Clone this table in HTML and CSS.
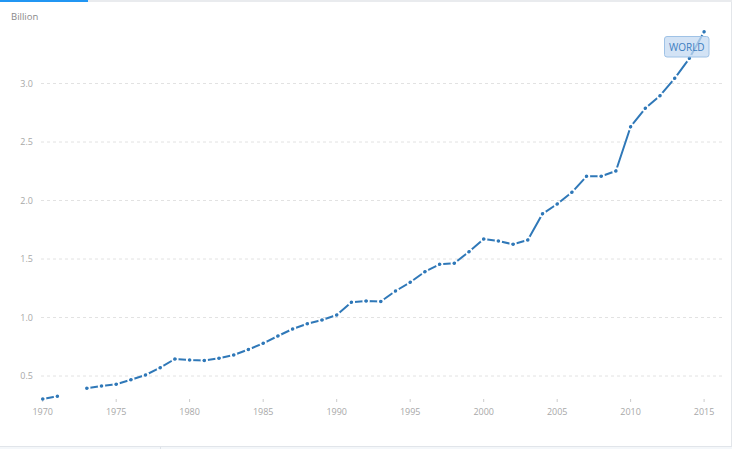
FILE: index.html
```html
<!DOCTYPE html>
<html lang="en">
<head>
<meta charset="utf-8">
<title>World chart</title>
<link rel="stylesheet" href="styles.css">
</head>
<body>
<div class="panel">
  <div class="tabbar"><div class="tab-active"></div><div class="tab-rest"></div></div>
  <div class="chart">
    <svg class="plot" width="731" height="444" viewBox="0 2 731 444" xmlns="http://www.w3.org/2000/svg">
      <defs>
        <g id="pts">
          <circle cx="42.7" cy="399" r="1"/>
          <circle cx="57.4" cy="396.3" r="1"/>
          <circle cx="86.8" cy="388.3" r="1"/>
          <circle cx="101.5" cy="386" r="1"/>
          <circle cx="116.2" cy="384.3" r="1"/>
          <circle cx="130.9" cy="379.7" r="1"/>
          <circle cx="145.5" cy="375" r="1"/>
          <circle cx="160.2" cy="367.7" r="1"/>
          <circle cx="174.9" cy="359" r="1"/>
          <circle cx="189.6" cy="360" r="1"/>
          <circle cx="204.3" cy="360.5" r="1"/>
          <circle cx="219" cy="358.3" r="1"/>
          <circle cx="233.7" cy="355" r="1"/>
          <circle cx="248.4" cy="349.5" r="1"/>
          <circle cx="263.2" cy="343.3" r="1"/>
          <circle cx="277.9" cy="336" r="1"/>
          <circle cx="292.6" cy="329" r="1"/>
          <circle cx="307.3" cy="323.8" r="1"/>
          <circle cx="322" cy="320" r="1"/>
          <circle cx="336.7" cy="315" r="1"/>
          <circle cx="351.4" cy="302.3" r="1"/>
          <circle cx="366.1" cy="301" r="1"/>
          <circle cx="380.8" cy="301.5" r="1"/>
          <circle cx="395.5" cy="291" r="1"/>
          <circle cx="410.2" cy="282.3" r="1"/>
          <circle cx="424.9" cy="271.7" r="1"/>
          <circle cx="439.6" cy="264.3" r="1"/>
          <circle cx="454.3" cy="263.3" r="1"/>
          <circle cx="469" cy="251.7" r="1"/>
          <circle cx="483.7" cy="239" r="1"/>
          <circle cx="498.4" cy="241" r="1"/>
          <circle cx="513.1" cy="244.3" r="1"/>
          <circle cx="527.8" cy="240" r="1"/>
          <circle cx="542.5" cy="213.8" r="1"/>
          <circle cx="557.2" cy="204" r="1"/>
          <circle cx="571.9" cy="192.3" r="1"/>
          <circle cx="586.5" cy="176.3" r="1"/>
          <circle cx="601.2" cy="176.3" r="1"/>
          <circle cx="615.9" cy="171" r="1"/>
          <circle cx="630.6" cy="126.7" r="1"/>
          <circle cx="645.3" cy="108.3" r="1"/>
          <circle cx="660" cy="95.7" r="1"/>
          <circle cx="674.7" cy="78.3" r="1"/>
          <circle cx="689.4" cy="58.3" r="1"/>
          <circle cx="704.1" cy="31.7" r="1"/>
        </g>
        <mask id="gaps" maskUnits="userSpaceOnUse" x="0" y="0" width="736" height="449">
          <rect x="0" y="0" width="736" height="449" fill="#fff"/>
          <use href="#pts" fill="#000" stroke="#000" stroke-width="5.4"/>
        </mask>
      </defs>

      <text class="unit" x="11" y="20">Billion</text>

      <g class="grid">
        <line x1="41" y1="83.5" x2="723" y2="83.5"/>
        <line x1="41" y1="142" x2="723" y2="142"/>
        <line x1="41" y1="200.5" x2="723" y2="200.5"/>
        <line x1="41" y1="259" x2="723" y2="259"/>
        <line x1="41" y1="317.5" x2="723" y2="317.5"/>
        <line x1="41" y1="376" x2="723" y2="376"/>
      </g>

      <g class="ylabels">
        <text x="33" y="86.8">3.0</text>
        <text x="33" y="145.3">2.5</text>
        <text x="33" y="203.8">2.0</text>
        <text x="33" y="262.3">1.5</text>
        <text x="33" y="320.8">1.0</text>
        <text x="33" y="379.3">0.5</text>
      </g>

      <g class="ticks">
        <line x1="42.7" y1="399" x2="42.7" y2="402"/>
        <line x1="116.2" y1="399" x2="116.2" y2="402"/>
        <line x1="189.6" y1="399" x2="189.6" y2="402"/>
        <line x1="263.2" y1="399" x2="263.2" y2="402"/>
        <line x1="336.7" y1="399" x2="336.7" y2="402"/>
        <line x1="410.2" y1="399" x2="410.2" y2="402"/>
        <line x1="483.7" y1="399" x2="483.7" y2="402"/>
        <line x1="557.2" y1="399" x2="557.2" y2="402"/>
        <line x1="630.6" y1="399" x2="630.6" y2="402"/>
        <line x1="704.1" y1="399" x2="704.1" y2="402"/>
      </g>

      <g class="xlabels">
        <text x="42.7" y="415">1970</text>
        <text x="116.2" y="415">1975</text>
        <text x="189.6" y="415">1980</text>
        <text x="263.2" y="415">1985</text>
        <text x="336.7" y="415">1990</text>
        <text x="410.2" y="415">1995</text>
        <text x="483.7" y="415">2000</text>
        <text x="557.2" y="415">2005</text>
        <text x="630.6" y="415">2010</text>
        <text x="704.1" y="415">2015</text>
      </g>

      <g class="series" mask="url(#gaps)">
        <polyline points="42.7,399 57.4,396.3"/>
        <polyline points="86.8,388.3 101.5,386 116.2,384.3 130.9,379.7 145.5,375 160.2,367.7 174.9,359 189.6,360 204.3,360.5 219,358.3 233.7,355 248.4,349.5 263.2,343.3 277.9,336 292.6,329 307.3,323.8 322,320 336.7,315 351.4,302.3 366.1,301 380.8,301.5 395.5,291 410.2,282.3 424.9,271.7 439.6,264.3 454.3,263.3 469,251.7 483.7,239 498.4,241 513.1,244.3 527.8,240 542.5,213.8 557.2,204 571.9,192.3 586.5,176.3 601.2,176.3 615.9,171 630.6,126.7 645.3,108.3 660,95.7 674.7,78.3 689.4,58.3 704.1,31.7"/>
      </g>
      <use href="#pts" class="dots" fill="#2f78b8" stroke="#2f78b8" stroke-width="1.5"/>

      <g class="tag">
        <rect x="664.5" y="36.5" width="44.5" height="20.5" rx="2.5" ry="2.5"/>
        <text x="686.8" y="50.5">WORLD</text>
      </g>
    </svg>
  </div>
  <div class="footer"><div class="footer-cell first"></div><div class="footer-cell"></div></div>
</div>
</body>
</html>
```

FILE: styles.css
```css
html, body {
  margin: 0;
  padding: 0;
  background: #ffffff;
  font-family: "Open Sans", "Liberation Sans", sans-serif;
}

.panel {
  width: 732px;
  height: 449px;
  display: flex;
  flex-direction: column;
  overflow: hidden;
}

.tabbar {
  height: 2px;
  display: flex;
  flex: 0 0 auto;
}

.tab-active {
  width: 88px;
  background: #2196f3;
}

.tab-rest {
  flex: 1;
  background: #e9ebee;
}

.chart {
  height: 444px;
  flex: 0 0 auto;
  border-right: 1px solid #e3e6ea;
  border-bottom: 1px solid #e1e5ea;
}

.plot {
  display: block;
  font-family: "Open Sans", "Liberation Sans", sans-serif;
}

.unit {
  font-size: 9.5px;
  fill: #8a8a8a;
}

.grid line {
  stroke: #e2e2e2;
  stroke-width: 1;
  stroke-dasharray: 3 3;
}

.ylabels text {
  font-size: 9px;
  fill: #a8a8a8;
  text-anchor: end;
}

.xlabels text {
  font-size: 9px;
  fill: #a8a8a8;
  text-anchor: middle;
}

.ticks line {
  stroke: #cccccc;
  stroke-width: 1;
}

.series polyline {
  fill: none;
  stroke: #2f78b8;
  stroke-width: 2;
  stroke-linejoin: round;
}

.tag rect {
  fill: rgba(196, 218, 242, 0.75);
  stroke: #9fc2e6;
  stroke-width: 1;
}

.tag text {
  font-size: 10px;
  fill: #3c7dbf;
  text-anchor: middle;
}

.footer {
  flex: 1;
  display: flex;
  background: #f4f7fa;
}

.footer-cell {
  flex: 1;
}

.footer-cell.first {
  flex: 0 0 160px;
  border-right: 1px solid #dde2e8;
}
```
